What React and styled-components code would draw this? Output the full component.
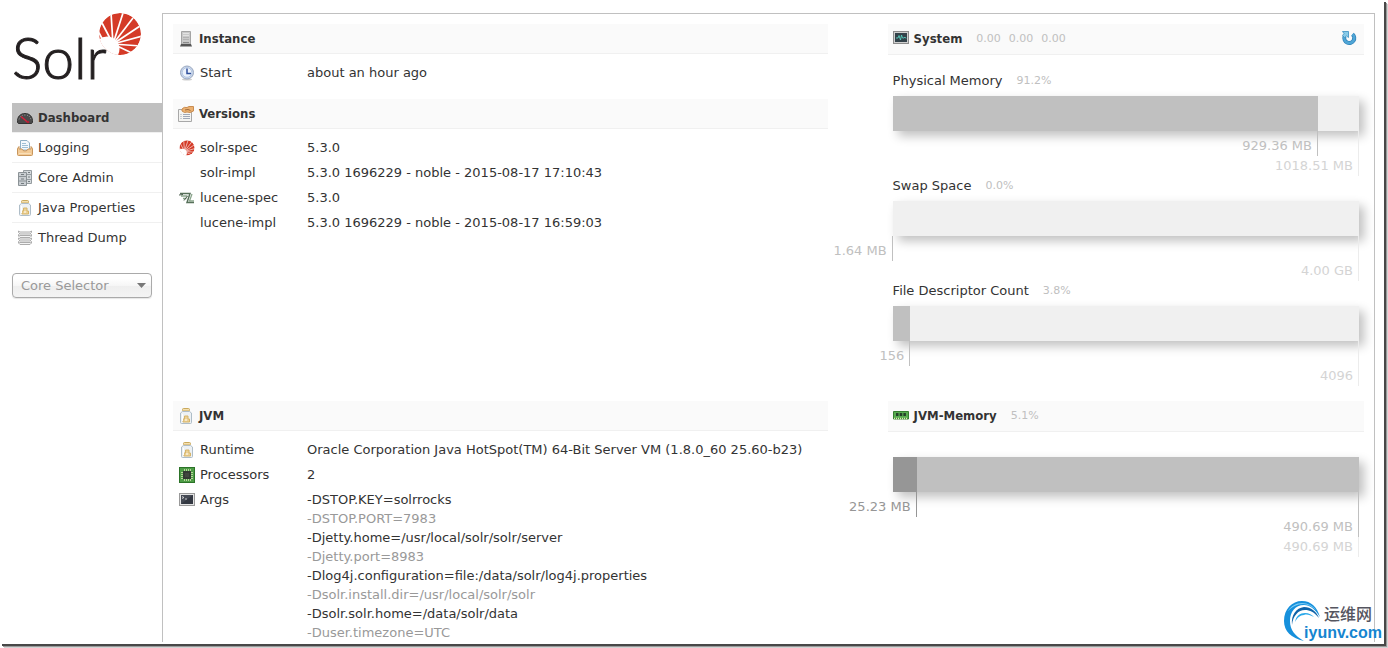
import React from "react";
import styled, { createGlobalStyle } from "styled-components";

const GlobalStyle = createGlobalStyle`
  *, *::before, *::after { box-sizing: border-box; }
  body {
    margin: 0;
    background: #fff;
    color: #333;
    font-family: "DejaVu Sans", sans-serif;
    font-size: 13px;
    line-height: 19px;
  }
  ul, dl, dd, h1, h2, h3, p { margin: 0; padding: 0; }
  ul { list-style: none; }
`;

const boldFace = `
  font-family: "DejaVu Sans Condensed", "Noto Sans", sans-serif;
  font-weight: 700;
`;

const Frame = styled.div`
  position: relative;
  display: flex;
  min-height: calc(100vh - 4px);
  margin: 0 4px 4px 0;
  padding: 13px 9px 2px 12px;
  background: #fff;
  box-shadow: 2px 2px 0 #484848, 3px 3px 0 #9a9a9a, 4px 4px 0 #d4d4d4;
`;

const Sidebar = styled.div`
  flex: 0 0 150px;
`;

const Logo = styled.a`
  position: relative;
  display: block;
  height: 90px;
  color: #231f20;
  text-decoration: none;
`;

const LogoWord = styled.span`
  display: block;
  padding-top: 12px;
  font-family: Lato, sans-serif;
  font-weight: 300;
  font-size: 57px;
  line-height: 64px;
  -webkit-text-stroke: 1px #231f20;
`;

const LogoSun = styled.svg`
  position: absolute;
  top: 0;
  left: 86px;
`;

const MenuLink = styled.a`
  display: flex;
  align-items: center;
  gap: 5px;
  height: 30px;
  padding-left: 5px;
  border-bottom: 1px solid ${(p) => (p.$last ? "transparent" : "#f0f0f0")};
  color: #333;
  text-decoration: none;
  ${(p) => p.$active && `background: #c0c0c0; ${boldFace}`}
`;

const Selector = styled.div`
  position: relative;
  margin: 20px 10px 0 0;

  svg {
    position: absolute;
    top: 10px;
    right: 6px;
    pointer-events: none;
  }
`;

const Select = styled.select`
  appearance: none;
  display: block;
  width: 100%;
  height: 25px;
  padding: 0 8px;
  border: 1px solid #aaa;
  border-radius: 4px;
  background: linear-gradient(#fff 20%, #f6f6f6 50%, #eee 52%, #f4f4f4 100%);
  box-shadow: 0 1px 1px rgba(0, 0, 0, 0.1);
  color: #999;
  font: inherit;
`;

const Main = styled.main`
  flex: 1;
  display: grid;
  grid-template-columns: 55% 40%;
  justify-content: space-between;
  align-content: start;
  row-gap: 15px;
  padding: 10px 10px 0;
  border: 1px solid #c0c0c0;
  border-bottom: 0;
`;

const Column = styled.div`
  display: flex;
  flex-direction: column;
  gap: 14px;
`;

const PanelHead = styled.header`
  display: flex;
  align-items: center;
  height: ${(p) => (p.$tall ? 31 : 30)}px;
  padding: 0 7px ${(p) => (p.$tall ? 2 : 0)}px 5px;
  border-bottom: 1px solid #f0f0f0;
  background: #fafafa;
`;

const PanelTitle = styled.h2`
  display: flex;
  align-items: center;
  gap: 5px;
  ${boldFace}
  font-size: 13px;
`;

const Small = styled.span`
  display: inline-flex;
  gap: 8px;
  margin-left: 14px;
  color: #c0c0c0;
  font-size: 11px;
`;

const Refresh = styled.button`
  display: flex;
  margin-left: auto;
  padding: 0;
  border: 0;
  background: none;
`;

const Facts = styled.dl`
  padding-top: 6px;
`;

const Fact = styled.div`
  display: flex;
  min-height: 25px;
  padding: 3px 0 0 6px;
`;

const FactName = styled.dt`
  display: flex;
  gap: 5px;
  flex: 0 0 128px;
  height: 19px;
  align-items: center;
`;

const Blank = styled.span`
  width: 16px;
`;

const Arg = styled.li`
  color: ${(p) => (p.$dim ? "#999" : "#333")};
`;

const Meters = styled.div`
  padding: ${(p) => (p.$bare ? 25 : 16)}px 5px 0;
`;

const MeterTitle = styled.h3`
  display: flex;
  align-items: center;
  height: 18px;
  margin-bottom: 7px;
  font-size: 13px;
  font-weight: 400;
`;

const Bar = styled.div`
  display: grid;
  height: 35px;
  background: #f0f0f0;
  box-shadow: 5px 5px 10px #c0c0c0;
`;

const Fill = styled.div`
  grid-area: 1 / 1;
  background: ${(p) => p.$tone};
`;

const Ticks = styled.div`
  display: grid;
  margin-left: -1px;
  padding-right: 1px;
`;

const Tick = styled.div`
  grid-area: 1 / 1;
  display: flex;
  justify-content: flex-end;
  align-items: flex-end;
  height: ${(p) => 5 + 20 * p.$level}px;
  border-right: 1px solid ${(p) => p.$line};
  color: ${(p) => p.$ink};
  line-height: 20px;
  white-space: nowrap;
`;

const TickText = styled.span`
  flex: none;
  margin-right: 5px;
`;

const Watermark = styled.div`
  position: absolute;
  right: 2px;
  bottom: 0;
  display: flex;
  align-items: flex-end;
`;

const WatermarkText = styled.p`
  display: flex;
  flex-direction: column;
  align-items: flex-end;
  margin-left: -18px;
  font-family: "Liberation Sans", sans-serif;
  font-weight: 700;
  font-size: 16px;
  line-height: 17px;
  padding-bottom: 3px;
  color: #1585d0;
`;

const WatermarkName = styled.span`
  padding-right: 10px;
  font-family: "Noto Sans CJK SC", sans-serif;
  font-weight: 500;
  line-height: 21px;
  color: #55555f;
`;

function Svg({ children }) {
  return (
    <svg width="16" height="16" viewBox="0 0 16 16" aria-hidden="true">
      {children}
    </svg>
  );
}

const sunRays = [
  [15, 10],
  [24, 0],
  [36, 0],
  [46, 5],
  [53, 13],
  [55, 23],
  [54, 33],
  [47, 41],
];

function SunShape({ id }) {
  return (
    <g>
      <clipPath id={id}><circle cx="33" cy="21" r="21" /></clipPath>
      <g clipPath={`url(#${id})`}>
        <circle cx="33" cy="21" r="21" fill="#d43a27" />
        {sunRays.map(([x, y]) => (
          <path key={`${x}-${y}`} d={`M26 31L${x} ${y}`} stroke="#fff" strokeWidth="1.7" />
        ))}
        <path d="M18 31L11 18" stroke="#fff" strokeWidth="1.7" />
        <circle cx="20" cy="36" r="12.500" fill="#fff" />
      </g>
    </g>
  );
}

const icons = {
  gauge: (
    <Svg>
      <path d="M.5 12.500C0 6.500 3.500 3.500 8 3.500S16 6.500 15.500 12.500Q15 13.500 14 13.500H2Q1 13.500.5 12.500Z" fill="#4a4a4a" stroke="#333" />
      <path d="M2 9.500C3 6 5 5 8 5s5 1 6 4.500" fill="none" stroke="#999" strokeDasharray="1 1.500" />
      <path d="M4 6.500L11 12.500" stroke="#d8203a" strokeWidth="1.500" />
      <circle cx="11" cy="12" r="1.300" fill="#b02035" />
    </Svg>
  ),
  inbox: (
    <Svg>
      <path d="M3.500.5H10L12.500 3V10H3.500Z" fill="#f4f9fc" stroke="#8fb0c4" />
      <path d="M5 3.500h4M5 5.500h6M5 7.500h6" stroke="#9fc0d4" />
      <path d="M.5 8.500L2 6.500V9H5Q5.500 11 8 11T11 9H14V6.500L15.500 8.500V14.500Q15.500 15.500 14.500 15.500H1.500Q.5 15.500.5 14.500Z" fill="#f2ca96" stroke="#c8965c" />
      <path d="M2 13.500H14" stroke="#f9dfb8" />
    </Svg>
  ),
  cabinets: (
    <Svg>
      <path d="M6.500.5H14.500V13.500H6.500Z" fill="#d4d9dc" stroke="#959ca0" />
      <path d="M7 4.500H14M7 9.500H14" stroke="#959ca0" />
      <path d="M1.500 2.500H9.500V15.500H1.500Z" fill="#c9ced2" stroke="#8b9296" />
      <path d="M2 6.500H9M2 11H9" stroke="#8b9296" />
      <path d="M4 4.500h3M4 9h3M4 13.500h3M11 2.500h2M11 7h2M11 11.500h2" stroke="#747c80" />
    </Svg>
  ),
  jar: (
    <Svg>
      <rect x="4.500" y=".5" width="7" height="2.500" rx="1" fill="#f4dfae" stroke="#c9a95c" />
      <path d="M4.500 3.500H11.500L13.500 5V14.500Q13.500 15.500 12.500 15.500H3.500Q2.500 15.500 2.500 14.500V5Z" fill="#edf1f4" stroke="#aebdc8" />
      <path d="M5 14V11H6.500V8H10V11H11.500V14Z" fill="#ecd196" stroke="#d6b468" />
      <path d="M7 12h2M4.500 6V13" stroke="#fff" />
    </Svg>
  ),
  threads: (
    <Svg>
      {[1, 4.5, 8, 11.5].map((y) => (
        <path
          key={y}
          d={`M1.500 ${y}L3 ${y + 1}H13L14.500 ${y}V${y + 1.5}L13 ${y + 3}H3L1.500 ${y + 1.5}Z`}
          fill="#f4f4f4"
          stroke="#acacac"
        />
      ))}
    </Svg>
  ),
  server: (
    <Svg>
      <path d="M3.500.5H12.500V13H3.500Z" fill="#c9c9c9" stroke="#a4a4a4" />
      <path d="M5 2.500h6M5 4.500h6" stroke="#e2e2e2" />
      <path d="M5 6.500h6M5 8.500h6" stroke="#b2b2b2" />
      <path d="M3 13H13L14 15.500H2Z" fill="#565656" />
      <path d="M5 11.500h6" stroke="#8a8a8a" />
    </Svg>
  ),
  clock: (
    <Svg>
      <ellipse cx="8" cy="14.500" rx="5" ry="1" fill="#cfcfcf" />
      <circle cx="8" cy="7.500" r="6.500" fill="#c9d7ec" stroke="#9aa8c0" />
      <circle cx="8" cy="7.500" r="4.800" fill="#edf3fb" stroke="#b4c6e2" />
      <path d="M8 3.500V8.500H12" fill="none" stroke="#2f4f9c" strokeWidth="1.500" />
    </Svg>
  ),
  versions: (
    <Svg>
      <path d="M.5 3.500H13.500V15.500H.5Z" fill="#f4f4f2" stroke="#a8a8a8" />
      <path d="M2.500 8.500h1M5 8.500h7M2.500 10.500h1M5 10.500h7M2.500 12.500h1M5 12.500h7" stroke="#9fa8b8" />
      <path d="M4 3Q6 .5 9 1.500L11 .5H15.500V5L12 6.500 9 6 6.500 6.500 4 5Z" fill="#eab070" stroke="#c98c50" />
      <path d="M7 4L10 3.500 12.500 4.500" fill="none" stroke="#9f6a3c" />
    </Svg>
  ),
  sun: (
    <svg width="16" height="16" viewBox="11 0 44 43" aria-hidden="true"><SunShape id="sun-small" /></svg>
  ),
  lucene: (
    <Svg>
      <path d="M1 3.500H11L8 12.500H15" fill="none" stroke="#57705a" strokeWidth="1.500" />
      <path d="M13 4L10.500 11H15M2 6H8.500M4 8.500H7.500" fill="none" stroke="#8aa58c" strokeWidth="1.300" />
      <path d="M0 5L4 4.500M5 10.500L8.500 6" stroke="#4b5d4d" />
    </Svg>
  ),
  chip: (
    <Svg>
      <rect x=".5" y=".5" width="15" height="15" fill="#4d9c46" stroke="#2c7328" />
      <path d="M5.500 2V14M7.500 2V14M9.500 2V14M11.500 2V14M2 5.500H14M2 7.500H14M2 9.500H14M2 11.500H14" stroke="#b8d49a" strokeWidth="1" />
      <rect x="4" y="4" width="8" height="8" fill="#343b33" />
      <rect x="6" y="6" width="4" height="4" fill="#41483f" />
    </Svg>
  ),
  terminal: (
    <Svg>
      <rect x=".5" y="1.500" width="15" height="12" fill="#e4e4e4" stroke="#999" />
      <rect x="2" y="3" width="12" height="9" fill="#454a54" />
      <path d="M2 12L14 3V12Z" fill="#333842" />
      <path d="M3 4.500L5 5.500 3 6.500M6 7h2" fill="none" stroke="#e6e6e6" strokeWidth=".8" />
    </Svg>
  ),
  monitor: (
    <Svg>
      <rect x=".5" y="1.500" width="15" height="12" fill="#d0d0d0" stroke="#8c8c8c" />
      <rect x="2" y="3" width="12" height="9" fill="#33424a" />
      <path d="M3 8H5L6 5.500 7.500 10 8.500 5 9.500 8H11L12 7 13 8.500" fill="none" stroke="#59cfc0" strokeWidth=".9" />
    </Svg>
  ),
  ram: (
    <Svg>
      <path d="M.5 4.500H15.500V12H.5Z" fill="#58ab50" stroke="#357f30" />
      <path d="M3 6h2.500v3H3ZM6.700 6h2.500v3H6.700ZM10.400 6h2.500v3H10.400Z" fill="#24402a" />
      <path d="M1 11.500H15" stroke="#dce9b0" strokeDasharray="1 1" strokeWidth="1.500" />
    </Svg>
  ),
  refresh: (
    <Svg>
      <path d="M11.500 4.200A5 5 0 1 1 3.500 6.500" fill="none" stroke="#2d7fb6" strokeWidth="4" />
      <path d="M11.500 4.200A5 5 0 1 1 3.500 6.500" fill="none" stroke="#4fa6d6" strokeWidth="2.600" />
      <path d="M1.500 1.500H7.500V7.500L5.500 6 3.500 7.500 1.500 5.500 3 3.500Z" fill="#8acbe8" stroke="#3b8fc2" strokeWidth=".8" />
    </Svg>
  ),
};

const menu = [
  ["Dashboard", "gauge"],
  ["Logging", "inbox"],
  ["Core Admin", "cabinets"],
  ["Java Properties", "jar"],
  ["Thread Dump", "threads"],
];

const versions = [
  ["solr-spec", "5.3.0", "sun"],
  ["solr-impl", "5.3.0 1696229 - noble - 2015-08-17 17:10:43"],
  ["lucene-spec", "5.3.0", "lucene"],
  ["lucene-impl", "5.3.0 1696229 - noble - 2015-08-17 16:59:03"],
];

const args = [
  "-DSTOP.KEY=solrrocks",
  "-DSTOP.PORT=7983",
  "-Djetty.home=/usr/local/solr/solr/server",
  "-Djetty.port=8983",
  "-Dlog4j.configuration=file:/data/solr/log4j.properties",
  "-Dsolr.install.dir=/usr/local/solr/solr",
  "-Dsolr.solr.home=/data/solr/data",
  "-Duser.timezone=UTC",
];

const LIGHT = { line: "#ececec", ink: "#d4d4d4" };
const MID = { tone: "#c0c0c0", line: "#c0c0c0", ink: "#c0c0c0" };
const DARK = { tone: "#969696", line: "#969696", ink: "#969696" };

const systemMeters = [
  { title: "Physical Memory", note: "91.2%", parts: [{ pct: 91.2, text: "929.36 MB", ...MID }, { pct: 100, text: "1018.51 MB", ...LIGHT }] },
  { title: "Swap Space", note: "0.0%", parts: [{ pct: 0, text: "1.64 MB", ...MID }, { pct: 100, text: "4.00 GB", ...LIGHT }] },
  { title: "File Descriptor Count", note: "3.8%", parts: [{ pct: 3.8, text: "156", ...MID }, { pct: 100, text: "4096", ...LIGHT }] },
];

const jvmMeter = {
  parts: [
    { pct: 5.14, text: "25.23 MB", ...DARK },
    { pct: 100, text: "490.69 MB", ...MID },
    { pct: 100, text: "490.69 MB", ...LIGHT },
  ],
};

function Head({ icon, title, notes, tall, children }) {
  return (
    <PanelHead $tall={tall}>
      <PanelTitle>{icons[icon]}{title}</PanelTitle>
      {notes && <Small>{notes.map((n, i) => <span key={i}>{n}</span>)}</Small>}
      {children}
    </PanelHead>
  );
}

function FactRow({ name, icon, children }) {
  return (
    <Fact>
      <FactName>{icon ? icons[icon] : <Blank />}{name}</FactName>
      <dd>{children}</dd>
    </Fact>
  );
}

function Meter({ title, note, parts }) {
  const fills = parts.filter((p) => p.tone).reverse();
  return (
    <div>
      {title && <MeterTitle>{title}<Small>{note}</Small></MeterTitle>}
      <Bar>
        {fills.map((p) => <Fill key={p.tone} $tone={p.tone} style={{ width: `${p.pct}%` }} />)}
      </Bar>
      <Ticks>
        {[...parts].reverse().map((p, i) => (
          <Tick
            key={i}
            $level={parts.length - i}
            $line={p.line}
            $ink={p.ink}
            style={{ width: `calc(${p.pct}% + 1px)` }}
          >
            <TickText>{p.text}</TickText>
          </Tick>
        ))}
      </Ticks>
    </div>
  );
}

export default function App() {
  return (
    <>
      <GlobalStyle />
      <Frame>
        <Sidebar>
          <Logo href="#/">
            <LogoWord>Solr</LogoWord>
            <LogoSun width="44" height="43" viewBox="11 0 44 43" aria-hidden="true">
              <SunShape id="sun-large" />
            </LogoSun>
          </Logo>
          <nav>
            <ul>
              {menu.map(([label, icon], i) => (
                <li key={label}>
                  <MenuLink href="#/" $active={i === 0} $last={i === menu.length - 1}>
                    {icons[icon]}{label}
                  </MenuLink>
                </li>
              ))}
            </ul>
          </nav>
          <Selector>
            <Select aria-label="Core Selector" defaultValue="">
              <option value="">Core Selector</option>
            </Select>
            <svg width="9" height="6" viewBox="0 0 9 6" aria-hidden="true"><path d="M0 0H9L4.500 5Z" fill="#777" /></svg>
          </Selector>
        </Sidebar>

        <Main>
          <Column>
            <section>
              <Head icon="server" title="Instance" />
              <Facts><FactRow name="Start" icon="clock">about an hour ago</FactRow></Facts>
            </section>
            <section>
              <Head icon="versions" title="Versions" />
              <Facts>
                {versions.map(([name, value, icon]) => (
                  <FactRow key={name} name={name} icon={icon}>{value}</FactRow>
                ))}
              </Facts>
            </section>
          </Column>
          <section>
            <Head icon="monitor" title="System" notes={["0.00", "0.00", "0.00"]} tall>
              <Refresh type="button" aria-label="Refresh">{icons.refresh}</Refresh>
            </Head>
            <Meters>
              {systemMeters.map((m) => <Meter key={m.title} {...m} />)}
            </Meters>
          </section>
          <section>
            <Head icon="jar" title="JVM" />
            <Facts>
              <FactRow name="Runtime" icon="jar">Oracle Corporation Java HotSpot(TM) 64-Bit Server VM (1.8.0_60 25.60-b23)</FactRow>
              <FactRow name="Processors" icon="chip">2</FactRow>
              <FactRow name="Args" icon="terminal">
                <ul>{args.map((a, i) => <Arg key={a} $dim={i % 2 === 1}>{a}</Arg>)}</ul>
              </FactRow>
            </Facts>
          </section>
          <section>
            <Head icon="ram" title="JVM-Memory" notes={["5.1%"]} tall />
            <Meters $bare><Meter {...jvmMeter} /></Meters>
          </section>
        </Main>

        <Watermark>
          <svg width="39" height="44" viewBox="0 0 39 44" aria-hidden="true">
            <path d="M21 41C8 38 1 31 1 21 1 9 9 1 19 1 28 1 34 7 37 17 32 9 27 5 21 5 12 5 7 12 7 21 7 30 12 36 21 41Z" fill="#1690dc" />
            <path d="M5 11C8 6 13 3 19 3 25 3 30 6 33 10 28 6 25 4 20 4 14 4 9 7 5 11Z" fill="#7fcdf4" />
            <path d="M9 25C8 15 13 8 21 7 28 7 33 11 36 18 31 12 27 10 22 10 15 10 10 16 9 25Z" fill="#0f63a8" />
            <path d="M12 22C13 16 17 13 22 13 26 13 29 15 31 17 27 15 24 14 21 15 17 15 14 18 12 22Z" fill="#29a8ea" />
          </svg>
          <WatermarkText>
            <WatermarkName lang="zh">运维网</WatermarkName>
            <span>iyunv.com</span>
          </WatermarkText>
        </Watermark>
      </Frame>
    </>
  );
}
